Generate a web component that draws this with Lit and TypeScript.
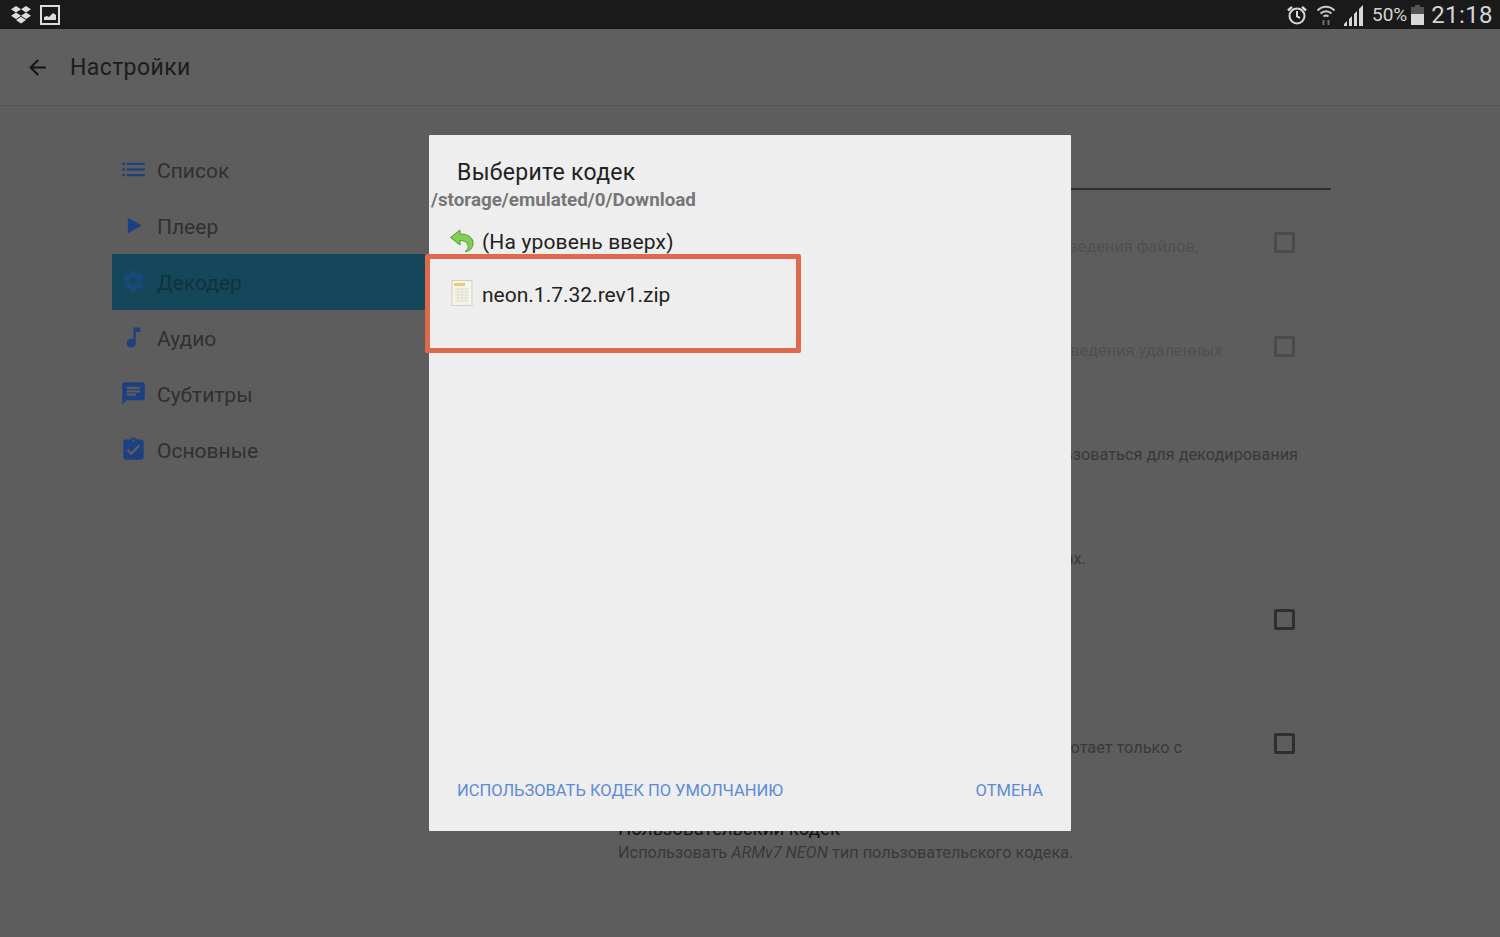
import { LitElement, html, css, svg } from "lit";
import { customElement } from "lit/decorators.js";

const NAV = [
  { label: "Список", icon: svg`<rect x="2" y="6" width="2.400" height="2" /><rect x="2" y="11" width="2.400" height="2"/><rect x="2" y="16" width="2.400" height="2"/><rect x="6" y="6" width="16" height="2"/><rect x="6" y="11" width="16" height="2"/><rect x="6" y="16" width="16" height="2"/>` },
  { label: "Плеер", icon: svg`<path d="M7 5.200v13.600L19.400 12z"/>` },
  { label: "Декодер", active: true, icon: svg`<path d="M19.14,12.94c0.04-0.3,0.06-0.61,0.06-0.94c0-0.32-0.02-0.64-0.07-0.94l2.03-1.58c0.18-0.14,0.23-0.41,0.12-0.61 l-1.92-3.32c-0.12-0.22-0.37-0.29-0.59-0.22l-2.39,0.96c-0.5-0.38-1.03-0.7-1.62-0.94L14.4,2.81c-0.04-0.24-0.24-0.41-0.48-0.41 h-3.84c-0.24,0-0.43,0.17-0.47,0.41L9.25,5.35C8.66,5.59,8.12,5.92,7.63,6.29L5.24,5.33c-0.22-0.08-0.47,0-0.59,0.22L2.74,8.87 C2.62,9.08,2.66,9.34,2.86,9.48l2.03,1.58C4.84,11.36,4.8,11.69,4.8,12s0.02,0.64,0.07,0.94l-2.03,1.58 c-0.18,0.14-0.23,0.41-0.12,0.61l1.92,3.32c0.12,0.22,0.37,0.29,0.59,0.22l2.39-0.96c0.5,0.38,1.03,0.7,1.62,0.94l0.36,2.54 c0.05,0.24,0.24,0.41,0.48,0.41h3.84c0.24,0,0.44-0.17,0.47-0.41l0.36-2.54c0.59-0.24,1.13-0.56,1.62-0.94l2.39,0.96 c0.22,0.08,0.47,0,0.59-0.22l1.92-3.32c0.12-0.22,0.07-0.47-0.12-0.61L19.14,12.94z M12,15.6c-1.98,0-3.6-1.62-3.6-3.6 s1.62-3.6,3.6-3.6s3.6,1.62,3.6,3.6S13.98,15.6,12,15.6z"/>` },
  { label: "Аудио", icon: svg`<path d="M12 3v10.550A4 4 0 1 0 14 17V7h4V3h-6z"/>` },
  { label: "Субтитры", icon: svg`<path d="M20 2H4c-1.100 0-2 .9-2 2v18l4-4h14c1.100 0 2-.9 2-2V4c0-1.100-.9-2-2-2zM6 9h12v2H6V9zm8 5H6v-2h8v2zm4-6H6V6h12v2z"/>` },
  { label: "Основные", icon: svg`<path d="M19 3h-4.180C14.400 1.840 13.300 1 12 1c-1.300 0-2.400.84-2.820 2H5c-1.100 0-2 .9-2 2v14c0 1.100.9 2 2 2h14c1.100 0 2-.9 2-2V5c0-1.100-.9-2-2-2zm-7 0c.55 0 1 .45 1 1s-.45 1-1 1-1-.45-1-1 .45-1 1-1zm-2 14l-4-4 1.410-1.410L10 14.170l6.590-6.590L18 9l-8 8z"/>` },
];

@customElement("app-root")
export class AppRoot extends LitElement {
  static styles = css`
    :host { display: block; width: 1500px; height: 937px; overflow: hidden; position: relative; background: #5d5d5d; font-family: Roboto, "Noto Sans", sans-serif; }
    * { box-sizing: border-box; }
    .status { height: 29px; background: #1a1a1a; display: flex; align-items: center; justify-content: space-between; padding: 0 7px 0 10px; color: #d4d4d4; }
    .status-left, .status-right { display: flex; align-items: center; }
    .status-left { gap: 8px; }
    .pct { font-size: 19px; margin-left: 7px; }
    .clock { font-size: 24px; margin-left: 7px; letter-spacing: 0.4px; }
    .toolbar { height: 77px; display: flex; align-items: center; padding: 1px 0 0 25px; border-bottom: 1px solid #555; background: #5f5f5f; }
    .back { width: 25px; height: 25px; fill: #151515; }
    .toolbar-title { font-size: 23px; color: #1c1c1c; margin-left: 20px; letter-spacing: 0.4px; }
    .body { display: flex; padding-left: 112px; }
    .nav { width: 315px; padding-top: 36px; flex: none; }
    .nav-row { height: 56px; display: flex; align-items: center; padding: 1px 0 0 8px; font-size: 21px; color: #303030; }
    .nav-row.active { background: #15475a; color: #13313d; }
    .nav-icon { width: 27px; height: 27px; fill: #1c4080; flex: none; margin: -2px 10px 0 0; }
    .nav-row.active .nav-icon { fill: #18497a; }
    .content { width: 713px; margin-left: 191px; padding-top: 82px; }
    .rule { height: 2px; background: #2f2f2f; }
    .rows { padding-top: 21px; }
    .row { display: flex; justify-content: space-between; }
    .row.h104 { height: 104px; }
    .row.h65 { height: 65px; }
    .row.h124 { height: 124px; }
    .row.h105 { height: 105px; }
    .copy { flex: 1; min-width: 0; padding-top: 24px; }
    .copy.titled { padding-top: 1px; }
    .row-title { height: 23px; line-height: 23px; font-size: 18.700px; color: #111; }
    .desc { height: 23px; line-height: 23px; font-size: 16.300px; color: #393939; display: flex; justify-content: flex-end; white-space: nowrap; }
    .off .desc { color: #505050; }
    .desc.w580 { width: 580px; }
    .desc.w604 { width: 604px; }
    .desc.w680 { width: 680px; }
    .desc.w468 { width: 468px; }
    .desc.w564 { width: 564px; }
    .desc.free { justify-content: flex-start; }
    .desc i { font-style: italic; }
    .check { width: 21px; height: 21px; border: 3px solid #2f2f2f; border-radius: 2px; margin: 21px 36px 0 0; flex: none; }
    .off .check { border-color: #4a4a4a; }
    .dialog { position: absolute; left: 429px; top: 135px; width: 642px; height: 696px; background: #eeeeee; display: flex; flex-direction: column; border-radius: 1px; }
    .d-title { font-size: 23px; letter-spacing: 0.3px; color: #222; margin: 24px 0 0 28px; line-height: 27px; }
    .d-path { font-size: 18.800px; font-weight: 700; color: #767676; margin: 2px 0 0 2px; line-height: 24px; }
    .file-row { display: flex; align-items: center; padding-left: 20px; font-size: 21px; color: #222; }
    .file-row svg { width: 25px; height: 28px; margin: -3px 8px 0 0; flex: none; }
    .up { margin-top: 11px; height: 37px; letter-spacing: 0.15px; }
    .file { margin-top: 8px; height: 53px; }
    .spacer { flex: 1; }
    .actions { display: flex; justify-content: space-between; padding: 0 28px 28px; font-size: 16.500px; color: #5b8bd8; line-height: 24px; }
    .mark { position: absolute; left: 425px; top: 254px; width: 376px; height: 99px; border: 5px solid #dd6a4c; border-radius: 2px; }
  `;

  render() {
    return html`
      <div class="status">
        <div class="status-left">
          <svg width="22" height="20" viewBox="0 0 22 20" fill="#ddd"><path d="M6 1 1 4.300l5 3.200 5-3.200zM16 1l-5 3.300 5 3.200 5-3.200zM1 10.800l5 3.200 5-3.200-5-3.300zM16 7.500l-5 3.300 5 3.200 5-3.200zM6 15l5 3.500 5-3.500-5-3.200z"/></svg>
          <svg width="20" height="20" viewBox="0 0 20 20"><rect x="1" y="1" width="18" height="18" fill="none" stroke="#ddd" stroke-width="2"/><path d="M4 15v-3l3-1 2 1 4-4 3 2v5z" fill="#ddd"/></svg>
        </div>
        <div class="status-right">
          <svg width="22" height="22" viewBox="0 0 22 22" fill="none" stroke="#d8d8d8" stroke-width="2"><circle cx="11" cy="12" r="7.500"/><path d="M11 7v5.500l3 1.500"/><path d="M2 6.500 6 2.800M20 6.500 16 2.800" stroke-width="2.400"/></svg>
          <svg style="margin-left:8px" width="20" height="24" viewBox="0 0 20 24" fill="none" stroke="#c8c8c8" stroke-width="2"><path d="M1.500 7.500C6.500 2.500 13.500 2.500 18.500 7.500"/><path d="M4.500 10.500c3.200-3 7.800-3 11 0"/><path d="M7.500 13.500c1.500-1.300 3.500-1.300 5 0"/><path d="M7.500 17v5M12.500 17v5" stroke="#707070"/></svg>
          <svg style="margin-left:8px" width="21" height="22" viewBox="0 0 21 22" fill="#d8d8d8"><path d="M0 22v-2l3-3v5zM5 22v-7l3-3v10zM10 22V10l3-3v15zM15 22V5l4-4v21z"/></svg>
          <span class="pct">50%</span>
          <svg style="margin-left:4px" width="13" height="20" viewBox="0 0 13 20"><path d="M4 0h5v2h4v18H0V2h4z" fill="#555"/><rect y="9" width="13" height="11" fill="#d8d8d8"/></svg>
          <span class="clock">21:18</span>
        </div>
      </div>
      <div class="toolbar">
        <svg class="back" viewBox="0 0 24 24"><path d="M20 11H7.830l5.590-5.590L12 4l-8 8 8 8 1.410-1.410L7.830 13H20v-2z"/></svg>
        <span class="toolbar-title">Настройки</span>
      </div>
      <div class="body">
        <nav class="nav">
          ${NAV.map((n) => html`
            <div class="nav-row ${n.active ? "active" : ""}">
              <svg class="nav-icon" viewBox="0 0 24 24">${n.icon}</svg>${n.label}
            </div>`)}
        </nav>
        <section class="content">
          <div class="rule"></div>
          <div class="rows">
            <div class="row h104 off">
              <div class="copy"><div class="desc w580">воспроизведения файлов,</div></div>
              <div class="check"></div>
            </div>
            <div class="row h104 off">
              <div class="copy"><div class="desc w604">воспроизведения удаленных</div></div>
              <div class="check"></div>
            </div>
            <div class="row h104">
              <div class="copy"><div class="desc w680">использоваться для декодирования</div></div>
            </div>
            <div class="row h65">
              <div class="copy"><div class="desc w468">форматах.</div></div>
            </div>
            <div class="row h124">
              <div class="copy"></div>
              <div class="check"></div>
            </div>
            <div class="row h105">
              <div class="copy"><div class="desc w564">работает только с</div></div>
              <div class="check"></div>
            </div>
            <div class="row">
              <div class="copy titled"><div class="row-title">Пользовательский кодек</div><div class="desc free"><span>Использовать <i>ARMv7 NEON</i> тип пользовательского кодека.</span></div></div>
            </div>
          </div>
        </section>
      </div>
      <div class="dialog">
        <div class="d-title">Выберите кодек</div>
        <div class="d-path">/storage/emulated/0/Download</div>
        <div class="file-row up">
          <svg viewBox="0 0 25 28"><path d="M11 4 1.500 11.500l9.500 7.500v-4.500c4 0 7 1 8 5 1 2-1 5-3 6 5 0 8-4 8-8.500 0-5.500-5-9-13-9z" fill="#82cf57" stroke="#4f9a2c" stroke-width="1"/></svg>
          <span>(На уровень вверх)</span>
        </div>
        <div class="file-row file">
          <svg viewBox="0 0 25 28"><rect x="3" y="1.500" width="20" height="25" fill="#f7f5e8" stroke="#cfcfc4"/><rect x="5" y="4" width="11" height="3" fill="#f0c878"/><path d="M6 10h14M6 13h14M6 16h14M6 19h14M6 22h14M9 9v14M13 9v14M17 9v14" stroke="#dcdcd2"/></svg>
          <span>neon.1.7.32.rev1.zip</span>
        </div>
        <div class="spacer"></div>
        <div class="actions"><span>ИСПОЛЬЗОВАТЬ КОДЕК ПО УМОЛЧАНИЮ</span><span>ОТМЕНА</span></div>
      </div>
      <div class="mark"></div>
    `;
  }
}
